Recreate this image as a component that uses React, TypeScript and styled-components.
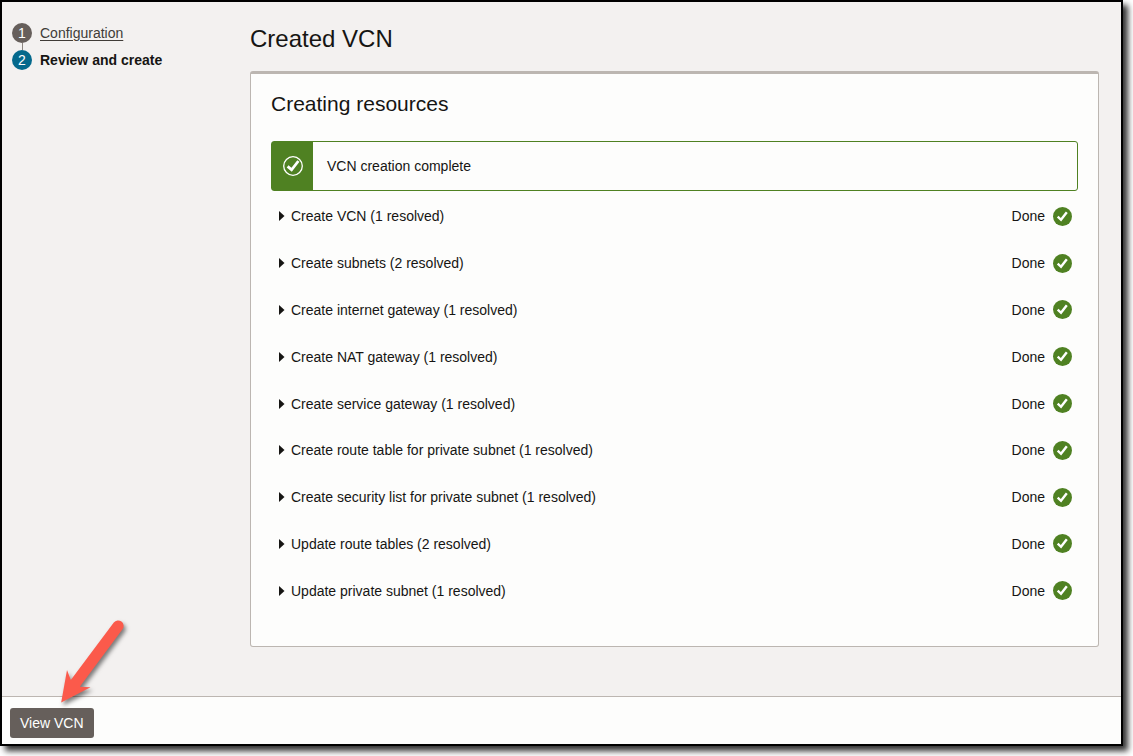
import React from "react";
import styled, { createGlobalStyle, css } from "styled-components";

const GlobalStyle = createGlobalStyle`
  *, *::before, *::after { box-sizing: border-box; }
  body {
    margin: 0;
    background: #ffffff;
    color: #161513;
    font-family: "Liberation Sans", Arial, sans-serif;
    font-size: 14px;
    line-height: 20px;
  }
`;

const Page = styled.div`
  display: flex;
  min-height: 100vh;
  padding: 0 10px 10px 0;
`;

const Frame = styled.div`
  flex: 1;
  display: flex;
  flex-direction: column;
  border: 2px solid #000000;
  background: #f3f1f0;
  box-shadow: 5px 5px 6px rgba(0, 0, 0, 0.8);
`;

const Body = styled.div`
  flex: 1;
  display: grid;
  grid-template-columns: 238px minmax(0, 1fr);
  padding: 21px 22px 49px 10px;
`;

const Steps = styled.ol`
  display: flex;
  flex-direction: column;
  gap: 7px;
  margin: 0;
  padding: 0;
  list-style: none;
`;

const Step = styled.li<{ $current?: boolean }>`
  position: relative;
  display: flex;
  align-items: center;
  gap: 8px;
  font-weight: ${(p) => (p.$current ? 700 : 400)};

  &:not(:first-child)::before {
    content: "";
    position: absolute;
    left: 10px;
    bottom: 100%;
    width: 1px;
    height: 7px;
    background: #8b8580;
  }
`;

const StepNumber = styled.span<{ $current?: boolean }>`
  width: 20px;
  height: 20px;
  border-radius: 50%;
  background: ${(p) => (p.$current ? "#04698c" : "#665f5b")};
  color: #ffffff;
  font-weight: 400;
  text-align: center;
`;

const StepLink = styled.a`
  color: #403c38;
  text-decoration: underline;
  text-underline-offset: 2px;
`;

const Content = styled.main`
  display: flex;
  flex-direction: column;
`;

const Title = styled.h1`
  margin: 0 0 16px;
  font-size: 24px;
  line-height: 32px;
  font-weight: 400;
`;

const Card = styled.section`
  flex: 1;
  display: flex;
  flex-direction: column;
  padding: 16px 20px 32px;
  border: 1px solid #bcb6b1;
  border-top-width: 3px;
  border-radius: 3px;
  background: #fdfdfc;
`;

const CardTitle = styled.h2`
  margin: 0 0 23px;
  font-size: 21px;
  line-height: 28px;
  font-weight: 400;
`;

const Banner = styled.div`
  display: flex;
  align-items: stretch;
  height: 50px;
  margin-bottom: 2px;
  border: 1px solid #4f8122;
  border-radius: 3px;
`;

const BannerIcon = styled.span`
  display: flex;
  align-items: center;
  justify-content: center;
  width: 41px;
  background: #4f8122;
`;

const BannerText = styled.span`
  align-self: center;
  padding-left: 14px;
`;

const Tasks = styled.ul`
  flex: 1;
  display: flex;
  flex-direction: column;
  margin: 0;
  padding: 0;
  list-style: none;
`;

const Task = styled.li`
  flex: 1;
  display: flex;
  align-items: center;
  justify-content: space-between;
  padding: 0 6px 0 8px;
`;

const buttonReset = css`
  border: 0;
  font: inherit;
  cursor: pointer;
`;

const Disclosure = styled.button`
  ${buttonReset}
  display: flex;
  align-items: center;
  gap: 6px;
  padding: 0;
  background: none;
  color: inherit;
`;

const Status = styled.span`
  display: flex;
  align-items: center;
  gap: 8px;
`;

const Footer = styled.footer`
  position: relative;
  display: flex;
  padding: 11px 8px 6px;
  border-top: 1px solid #bcb6b1;
  background: #fdfdfc;
`;

const PrimaryButton = styled.button`
  ${buttonReset}
  height: 30px;
  padding: 0 10px;
  border-radius: 3px;
  background: #665f5b;
  color: #ffffff;
`;

const Pointer = styled.svg`
  position: absolute;
  left: 52px;
  bottom: 30px;
  pointer-events: none;
  filter: drop-shadow(2px 3px 2px rgba(0, 0, 0, 0.5));
`;

const tasks = [
  "Create VCN (1 resolved)",
  "Create subnets (2 resolved)",
  "Create internet gateway (1 resolved)",
  "Create NAT gateway (1 resolved)",
  "Create service gateway (1 resolved)",
  "Create route table for private subnet (1 resolved)",
  "Create security list for private subnet (1 resolved)",
  "Update route tables (2 resolved)",
  "Update private subnet (1 resolved)",
];

const Caret = () => (
  <svg width="6" height="10" viewBox="0 0 6 10" aria-hidden="true">
    <path d="M0 0L5.5 5L0 10Z" fill="#161513" />
  </svg>
);

const DoneIcon = () => (
  <svg width="19" height="19" viewBox="0 0 19 19" aria-hidden="true">
    <circle cx="9.5" cy="9.5" r="9.5" fill="#4f8122" />
    <path d="M4.7 9.7L8 12.8L13.8 5.2" fill="none" stroke="#fff" strokeWidth="2.4" />
  </svg>
);

const CompleteIcon = () => (
  <svg width="20" height="20" viewBox="0 0 20 20" aria-hidden="true">
    <circle cx="10" cy="10" r="9.3" fill="none" stroke="#fff" strokeWidth="1.3" />
    <path d="M4.6 10.4L8.6 13.8L15.4 5" fill="none" stroke="#fff" strokeWidth="2.8" />
  </svg>
);

export default function App() {
  return (
    <>
      <GlobalStyle />
      <Page>
        <Frame>
          <Body>
            <nav aria-label="Progress">
              <Steps>
                <Step>
                  <StepNumber>1</StepNumber>
                  <StepLink href="#configuration">Configuration</StepLink>
                </Step>
                <Step $current aria-current="step">
                  <StepNumber $current>2</StepNumber>
                  <span>Review and create</span>
                </Step>
              </Steps>
            </nav>
            <Content>
              <Title>Created VCN</Title>
              <Card>
                <CardTitle>Creating resources</CardTitle>
                <Banner role="status">
                  <BannerIcon>
                    <CompleteIcon />
                  </BannerIcon>
                  <BannerText>VCN creation complete</BannerText>
                </Banner>
                <Tasks>
                  {tasks.map((task) => (
                    <Task key={task}>
                      <Disclosure type="button" aria-expanded={false}>
                        <Caret />
                        {task}
                      </Disclosure>
                      <Status>
                        Done
                        <DoneIcon />
                      </Status>
                    </Task>
                  ))}
                </Tasks>
              </Card>
            </Content>
          </Body>
          <Footer>
            <PrimaryButton type="button">View VCN</PrimaryButton>
            <Pointer width="80" height="100" viewBox="0 0 80 100" aria-hidden="true">
              <path
                d="M7.2 88.5L13 56L16.8 66L59.8 8.6A5.4 5.4 0 0 1 68.5 15.2L25.8 72.7L36.5 73.2Z"
                fill="#fb5a4b"
              />
            </Pointer>
          </Footer>
        </Frame>
      </Page>
    </>
  );
}
